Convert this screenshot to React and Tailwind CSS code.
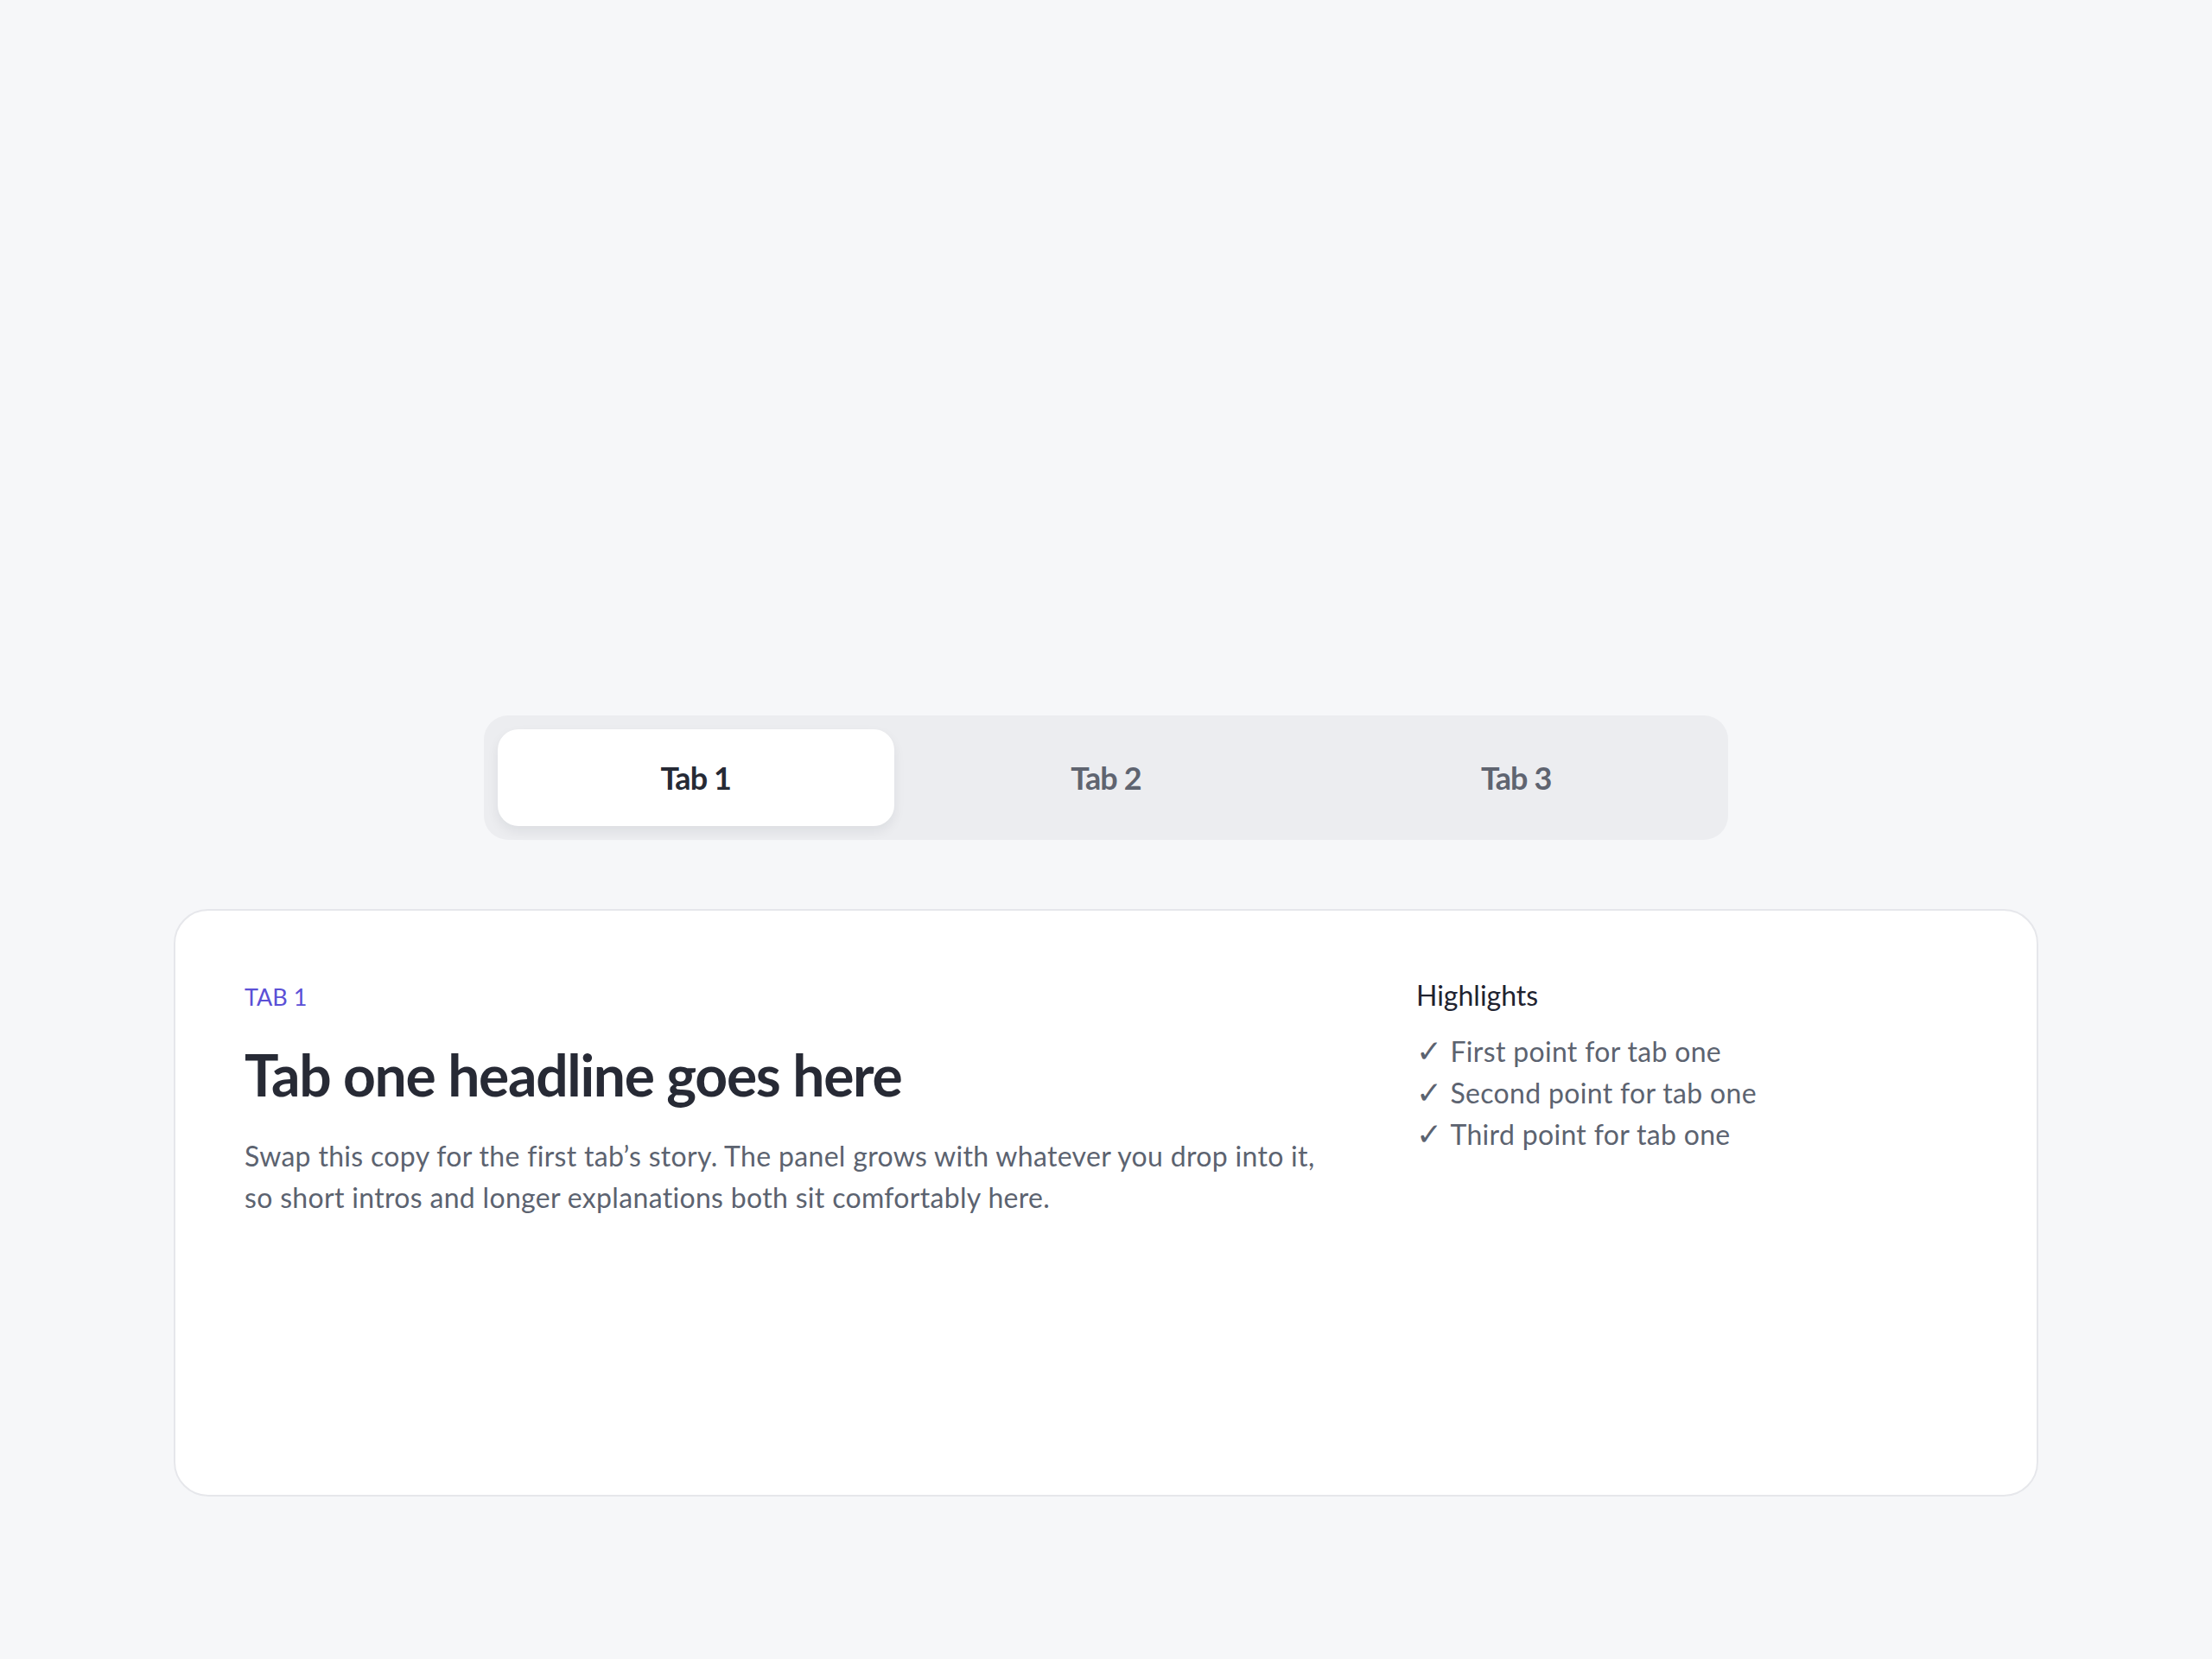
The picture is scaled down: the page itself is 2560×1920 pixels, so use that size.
import React, { useState } from 'react';

const tabs = [
    {
        id: 'one',
        label: 'Tab 1',
        eyebrow: 'TAB 1',
        title: 'Tab one headline goes here',
        body: 'Swap this copy for the first tab’s story. The panel grows with whatever you drop into it, so short intros and longer explanations both sit comfortably here.',
        points: ['First point for tab one', 'Second point for tab one', 'Third point for tab one']
    },
    {
        id: 'two',
        label: 'Tab 2',
        eyebrow: 'TAB 2',
        title: 'Tab two headline goes here',
        body: 'Swap this copy for the second tab’s story. The panel grows with whatever you drop into it, so short intros and longer explanations both sit comfortably here.',
        points: ['First point for tab two', 'Second point for tab two', 'Third point for tab two']
    },
    {
        id: 'three',
        label: 'Tab 3',
        eyebrow: 'TAB 3',
        title: 'Tab three headline goes here',
        body: 'Swap this copy for the third tab’s story. The panel grows with whatever you drop into it, so short intros and longer explanations both sit comfortably here.',
        points: ['First point for tab three', 'Second point for tab three', 'Third point for tab three']
    }
];

export default function App() {
    const [active, setActive] = useState('one');
    const tab = tabs.find((t) => t.id === active);

    return (
        <div className="min-h-screen w-full bg-[#f6f7f9] pt-[828px] font-['Lato',sans-serif]">
            {/* Tab switcher */}
            <div className="mx-auto flex w-[1440px] gap-4 rounded-[28px] bg-[#ecedf0] p-4">
                {tabs.map((t) => (
                    <button
                        key={t.id}
                        onClick={() => setActive(t.id)}
                        className={`flex h-28 flex-1 items-center justify-center rounded-3xl text-[36px] font-bold tracking-tight
                            ${active === t.id ? 'bg-white text-[#262a35] shadow-[0_6px_14px_rgba(20,24,40,0.07)]' : 'text-[#5f6470]'}
                        `}
                    >
                        {t.label}
                    </button>
                ))}
            </div>

            {/* Panel */}
            <div className="mx-auto mt-20 grid min-h-[680px] w-[2158px] grid-cols-[2fr_1fr] content-start gap-20 rounded-[40px] border-2 border-[#e6e7eb] bg-white p-20">
                <div>
                    <div className="text-[27px] leading-10 text-[#5b50d6]">{tab.eyebrow}</div>
                    <h2 className="mt-[34px] text-[66px] font-bold leading-[1.1] tracking-[-0.02em] text-[#272a35]">{tab.title}</h2>
                    <p className="mt-[33px] max-w-[1250px] text-[32px] leading-[48px] tracking-[0.01em] text-[#5c6370]">{tab.body}</p>
                </div>
                <div>
                    <div className="text-[32px] leading-9 text-[#1f2330]">Highlights</div>
                    <ul className="mt-[23px]">
                        {tab.points.map((p) => (
                            <li key={p} className="flex items-baseline gap-[9px] text-[32px] leading-[48px] tracking-[0.01em] text-[#5c6370]">
                                <span className="font-['DejaVu_Sans',sans-serif] text-[36px] font-bold leading-none">✓</span>
                                <span>{p}</span>
                            </li>
                        ))}
                    </ul>
                </div>
            </div>
        </div>
    );
}
